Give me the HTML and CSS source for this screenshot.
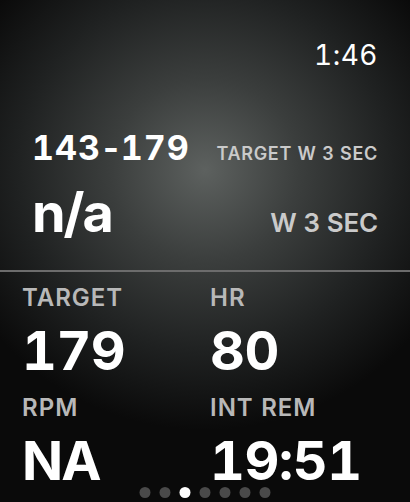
FILE: index.html
```html
<!DOCTYPE html>
<html lang="en">
<head>
  <meta charset="UTF-8">
  <meta name="viewport" content="width=device-width, initial-scale=1.0">
  <title>Workout</title>
  <link rel="stylesheet" href="styles.css">
</head>
<body>
  <div class="screen">
    <div class="top">
      <div class="clock">1:46</div>
      <div class="row row1">
        <span class="big">143<span class="dash">-</span>179</span>
        <span class="tag">TARGET W 3 SEC</span>
      </div>
      <div class="row row2">
        <span class="big big2">n/a</span>
        <span class="tag tag2">W 3 SEC</span>
      </div>
    </div>
    <div class="divider"></div>
    <div class="stats">
      <div class="cell">
        <div class="label">TARGET</div>
        <div class="value">179</div>
      </div>
      <div class="cell">
        <div class="label">HR</div>
        <div class="value">80</div>
      </div>
      <div class="cell">
        <div class="label">RPM</div>
        <div class="value value-na">NA</div>
      </div>
      <div class="cell">
        <div class="label">INT REM</div>
        <div class="value">19:51</div>
      </div>
    </div>
    <ul class="dots">
      <li></li>
      <li></li>
      <li class="on"></li>
      <li></li>
      <li></li>
      <li></li>
      <li></li>
    </ul>
  </div>
</body>
</html>
```
FILE: styles.css
```css
html, body {
  margin: 0;
  padding: 0;
  background: #050505;
}
.screen {
  position: relative;
  width: 410px;
  height: 502px;
  overflow: hidden;
  font-family: Inter, "Liberation Sans", sans-serif;
  font-feature-settings: "tnum";
  color: #fff;
  background: radial-gradient(ellipse 270px 260px at 205px 170px, #5d615f 0%, #3b3e3d 35%, #1f2121 70%, #0a0a0a 100%);
}
.top {
  height: 270px;
  box-sizing: border-box;
  padding-top: 41px;
}
.clock {
  font-size: 28px;
  line-height: 1;
  text-align: right;
  padding-right: 32px;
  letter-spacing: 0.5px;
}
.row {
  display: flex;
  justify-content: space-between;
  align-items: baseline;
  padding: 0 32px 0 32px;
}
.row1 {
  margin-top: 62px;
}
.row2 {
  margin-top: 21px;
}
.big {
  font-size: 34px;
  line-height: 1;
  font-weight: 700;
  letter-spacing: 1px;
}
.dash {
  font-feature-settings: "tnum" 0;
  letter-spacing: 0;
  margin: 0 2px;
}
.big2 {
  font-size: 54px;
  letter-spacing: -2px;
}
.tag {
  font-size: 18px;
  line-height: 1;
  font-weight: 600;
  color: #cacaca;
  letter-spacing: 0.7px;
}
.tag2 {
  font-size: 26px;
  letter-spacing: -0.2px;
}
.divider {
  height: 2px;
  background: #6c6c6c;
}
.stats {
  display: grid;
  grid-template-columns: 188px 1fr;
  row-gap: 18px;
  padding: 14px 0 0 22px;
}
.label {
  font-size: 24px;
  line-height: 1;
  font-weight: 600;
  color: #b8b8b8;
  letter-spacing: 1px;
}
.value {
  margin-top: 14px;
  font-size: 54px;
  line-height: 1;
  font-weight: 700;
  letter-spacing: -0.5px;
}
.value-na {
  letter-spacing: -2px;
}
.dots {
  position: absolute;
  left: 50%;
  bottom: 4px;
  transform: translateX(-50%);
  display: flex;
  gap: 9px;
  margin: 0;
  padding: 0;
  list-style: none;
}
.dots li {
  width: 11px;
  height: 11px;
  border-radius: 50%;
  background: #4a4a4a;
}
.dots li.on {
  background: #fff;
}
```
